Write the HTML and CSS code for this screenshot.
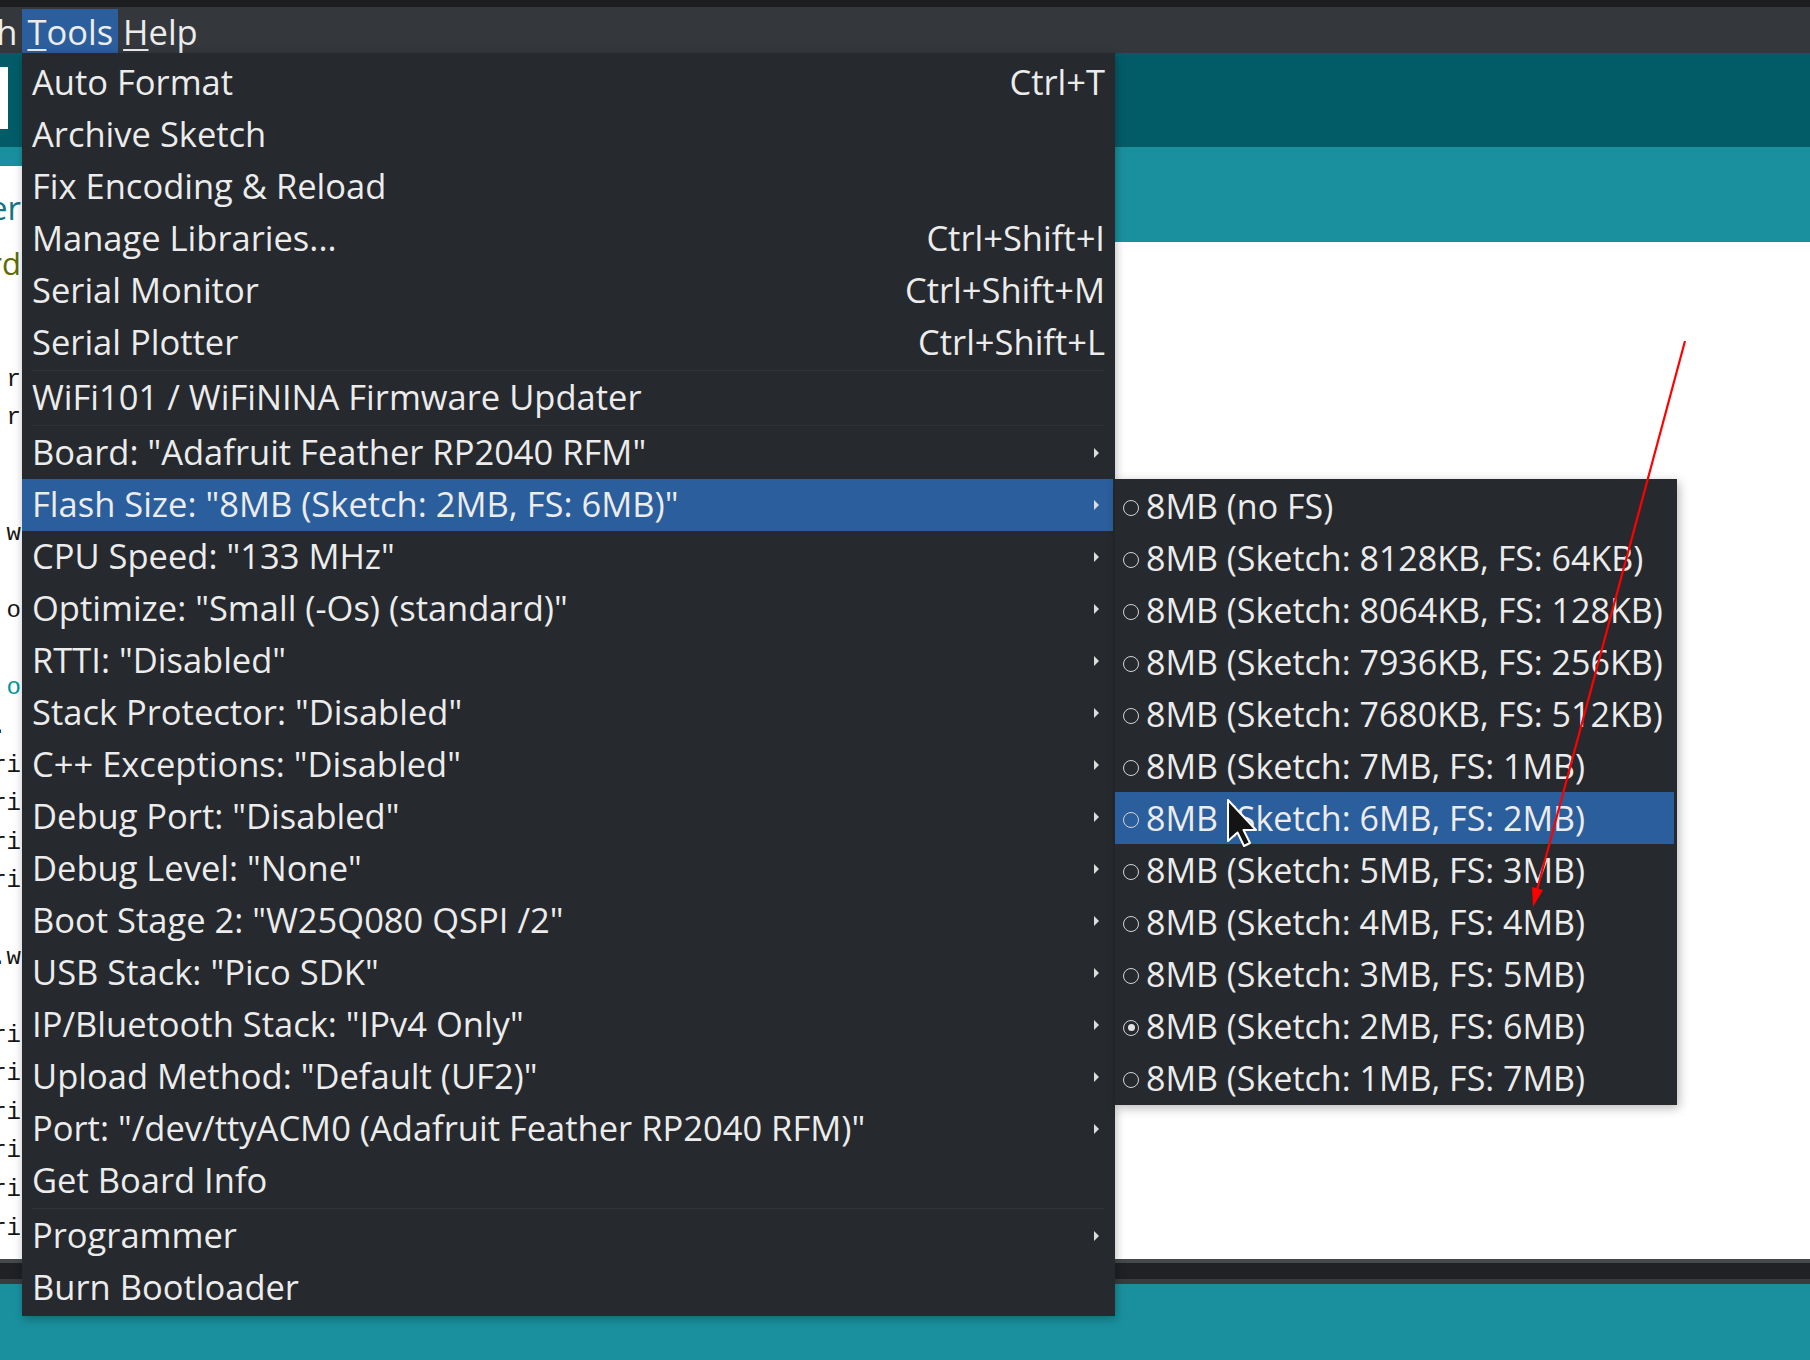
FILE: index.html
```html
<!DOCTYPE html>
<html lang="en">
<head>
<meta charset="utf-8">
<title>Arduino IDE - Tools menu</title>
<link rel="stylesheet" href="styles.css">
</head>
<body>
  <div class="topstrip"></div>
  <nav class="menubar">
    <span class="mb-item cut">Sketch</span>
    <span class="mb-item open"><span class="mn">T</span>ools</span>
    <span class="mb-item"><span class="mn">H</span>elp</span>
  </nav>

  <div class="toolbar"><div class="tb-btn"></div></div>
  <div class="tabs">
    <div class="tab"><div class="tab-label">rp2040_rfm_header</div></div>
  </div>
  <div class="editor">
    <div class="code-line olive sans">// Feather RP2040 RFM board</div>
    <div class="code-line"></div>
    <div class="code-line"></div>
    <div class="code-line">#define RFM95_CS   16 // r</div>
    <div class="code-line">#define RFM95_RST  17 // r</div>
    <div class="code-line"></div>
    <div class="code-line"></div>
    <div class="code-line">RH_RF95 rf95(RFM95_CS, RFM95_INT); w</div>
    <div class="code-line"></div>
    <div class="code-line">int16_t packetnum = 0; o</div>
    <div class="code-line"></div>
    <div class="code-line teal">void setup() { o</div>
    <div class="code-line">  Serial.begin(115200). </div>
    <div class="code-line">  Seri</div>
    <div class="code-line">  Seri</div>
    <div class="code-line">  Seri</div>
    <div class="code-line">  Seri</div>
    <div class="code-line"></div>
    <div class="code-line">  while (!rf95.init()) {.w</div>
    <div class="code-line"></div>
    <div class="code-line">    Seri</div>
    <div class="code-line">    Seri</div>
    <div class="code-line">    Seri</div>
    <div class="code-line">    Seri</div>
    <div class="code-line">    Seri</div>
    <div class="code-line">    Seri</div>
  </div>
  <div class="status"></div>
  <div class="console"></div>

  <div class="menu">
    <div class="item"><span class="label">Auto Format</span><span class="key">Ctrl+T</span></div>
    <div class="item"><span class="label">Archive Sketch</span></div>
    <div class="item"><span class="label">Fix Encoding &amp; Reload</span></div>
    <div class="item"><span class="label">Manage Libraries...</span><span class="key">Ctrl+Shift+I</span></div>
    <div class="item"><span class="label">Serial Monitor</span><span class="key">Ctrl+Shift+M</span></div>
    <div class="item"><span class="label">Serial Plotter</span><span class="key">Ctrl+Shift+L</span></div>
    <div class="sep"></div>
    <div class="item"><span class="label">WiFi101 / WiFiNINA Firmware Updater</span></div>
    <div class="sep"></div>
    <div class="item"><span class="label">Board: "Adafruit Feather RP2040 RFM"</span><span class="arrow"></span></div>
    <div class="item active"><span class="label">Flash Size: "8MB (Sketch: 2MB, FS: 6MB)"</span><span class="arrow"></span>
      <div class="submenu">
        <div class="sub-item"><span class="radio"></span>8MB (no FS)</div>
        <div class="sub-item"><span class="radio"></span>8MB (Sketch: 8128KB, FS: 64KB)</div>
        <div class="sub-item"><span class="radio"></span>8MB (Sketch: 8064KB, FS: 128KB)</div>
        <div class="sub-item"><span class="radio"></span>8MB (Sketch: 7936KB, FS: 256KB)</div>
        <div class="sub-item"><span class="radio"></span>8MB (Sketch: 7680KB, FS: 512KB)</div>
        <div class="sub-item"><span class="radio"></span>8MB (Sketch: 7MB, FS: 1MB)</div>
        <div class="sub-item active"><span class="radio"></span>8MB (Sketch: 6MB, FS: 2MB)</div>
        <div class="sub-item"><span class="radio"></span>8MB (Sketch: 5MB, FS: 3MB)</div>
        <div class="sub-item"><span class="radio"></span>8MB (Sketch: 4MB, FS: 4MB)</div>
        <div class="sub-item"><span class="radio"></span>8MB (Sketch: 3MB, FS: 5MB)</div>
        <div class="sub-item"><span class="radio checked"></span>8MB (Sketch: 2MB, FS: 6MB)</div>
        <div class="sub-item"><span class="radio"></span>8MB (Sketch: 1MB, FS: 7MB)</div>
      </div>
    </div>
    <div class="item"><span class="label">CPU Speed: "133 MHz"</span><span class="arrow"></span></div>
    <div class="item"><span class="label">Optimize: "Small (-Os) (standard)"</span><span class="arrow"></span></div>
    <div class="item"><span class="label">RTTI: "Disabled"</span><span class="arrow"></span></div>
    <div class="item"><span class="label">Stack Protector: "Disabled"</span><span class="arrow"></span></div>
    <div class="item"><span class="label">C++ Exceptions: "Disabled"</span><span class="arrow"></span></div>
    <div class="item"><span class="label">Debug Port: "Disabled"</span><span class="arrow"></span></div>
    <div class="item"><span class="label">Debug Level: "None"</span><span class="arrow"></span></div>
    <div class="item"><span class="label">Boot Stage 2: "W25Q080 QSPI /2"</span><span class="arrow"></span></div>
    <div class="item"><span class="label">USB Stack: "Pico SDK"</span><span class="arrow"></span></div>
    <div class="item"><span class="label">IP/Bluetooth Stack: "IPv4 Only"</span><span class="arrow"></span></div>
    <div class="item"><span class="label">Upload Method: "Default (UF2)"</span><span class="arrow"></span></div>
    <div class="item"><span class="label">Port: "/dev/ttyACM0 (Adafruit Feather RP2040 RFM)"</span><span class="arrow"></span></div>
    <div class="item"><span class="label">Get Board Info</span></div>
    <div class="sep"></div>
    <div class="item"><span class="label">Programmer</span><span class="arrow"></span></div>
    <div class="item"><span class="label">Burn Bootloader</span></div>
  </div>

  <svg class="annotation" width="1810" height="1360" viewBox="0 0 1810 1360" aria-hidden="true">
    <line x1="1685" y1="341" x2="1537" y2="890" stroke="#ff0000" stroke-width="2.2"/>
    <polygon points="1533,907 1543,890 1532,887" fill="#ff0000"/>
  </svg>

  <svg class="cursor" width="36" height="52" viewBox="0 0 36 52" aria-hidden="true">
    <polygon points="2,2 2,43 11.5,34.5 18,48 24,45 17.5,32 30,32" fill="#141414" stroke="#ffffff" stroke-width="2" stroke-linejoin="round"/>
  </svg>
</body>
</html>
```

FILE: styles.css
```css
* { box-sizing: border-box; }

html, body { margin: 0; padding: 0; }

body {
  width: 1810px;
  height: 1360px;
  overflow: hidden;
  position: relative;
  background: #ffffff;
  font-family: "Open Sans", "Noto Sans", sans-serif;
}

.topstrip {
  height: 7px;
  background: #1d1e20;
}

.menubar {
  height: 46px;
  background: #34373b;
  display: flex;
  align-items: stretch;
  color: #ececec;
  font-size: 34.5px;
  white-space: nowrap;
}

.mb-item {
  display: flex;
  align-items: center;
  padding: 0 5px;
  margin-top: 2px;
}

.mb-item.cut { margin-left: -94px; }

.mb-item.open { background: #2b5e9c; }

.mn {
  text-decoration: underline;
  text-decoration-thickness: 2px;
  text-underline-offset: 4px;
}

.toolbar {
  height: 94px;
  background: #025c68;
  padding-top: 14px;
}

.tb-btn {
  width: 8px;
  height: 62px;
  background: #ffffff;
}

.tabs {
  height: 95px;
  background: #1a909e;
  padding-top: 19px;
}

.tab {
  width: 320px;
  height: 76px;
  background: #ffffff;
  padding-top: 19px;
}

.tab-label {
  width: 21px;
  display: flex;
  justify-content: flex-end;
  overflow: hidden;
  white-space: nowrap;
  font-size: 33px;
  color: #137680;
}

.editor {
  height: 1017px;
  background: #ffffff;
  padding-top: 2px;
}

.code-line {
  width: 21px;
  height: 38.6px;
  display: flex;
  align-items: center;
  justify-content: flex-end;
  overflow: hidden;
  white-space: pre;
  font-family: "Liberation Mono", "DejaVu Sans Mono", monospace;
  font-size: 24px;
  color: #151515;
}

.code-line.olive { color: #5e6d03; }
.code-line.teal { color: #00979c; }
.code-line.sans {
  font-family: "Open Sans", "Noto Sans", sans-serif;
  font-size: 31px;
}

.status {
  height: 25px;
  background: #1f2124;
  border-top: 4px solid #46494c;
  border-bottom: 5px solid #383b3f;
}

.console {
  height: 76px;
  background: #1a909e;
}

/* Dropdown menu */
.menu {
  position: absolute;
  left: 22px;
  top: 53px;
  width: 1093px;
  background: #26292d;
  padding: 4px 0 2px;
  color: #ececec;
  font-size: 34.5px;
  box-shadow: 1px 3px 9px rgba(0, 0, 0, 0.28);
}

.item {
  position: relative;
  height: 52px;
  display: flex;
  align-items: center;
  padding: 0 10px 3px 10px;
  white-space: nowrap;
}

.item .label { flex: 1; }

.item .key { margin-left: 20px; }

.item .arrow {
  width: 0;
  height: 0;
  border-left: 5px solid #dcdcdc;
  border-top: 5px solid transparent;
  border-bottom: 5px solid transparent;
  margin: 3px 6px 0 0;
}

.item.active {
  background: #2b5e9c;
  margin-right: 2px;
  padding-right: 8px;
}

.sep {
  height: 3px;
  padding: 1px 10px;
}

.sep::after {
  content: "";
  display: block;
  height: 1px;
  background: #303338;
}

/* Submenu */
.submenu {
  position: absolute;
  left: calc(100% + 2px);
  top: 0;
  width: 562px;
  background: #26292d;
  padding: 1px 0;
  box-shadow: 2px 3px 10px rgba(0, 0, 0, 0.28);
  color: #ececec;
  font-size: 34px;
  z-index: 2;
}

.sub-item {
  height: 52px;
  display: flex;
  align-items: center;
  padding-left: 8px;
  white-space: nowrap;
}

.sub-item.active {
  background: #2b5e9c;
  margin-right: 3px;
}

.radio {
  width: 16px;
  height: 16px;
  border: 1.5px solid #d4d4d4;
  border-radius: 50%;
  margin: 3px 7px 0 0;
  flex: none;
  display: flex;
  align-items: center;
  justify-content: center;
}

.radio.checked::after {
  content: "";
  width: 7px;
  height: 7px;
  border-radius: 50%;
  background: #e4e4e4;
}

/* Overlays */
.annotation {
  position: absolute;
  left: 0;
  top: 0;
  pointer-events: none;
  z-index: 5;
}

.cursor {
  position: absolute;
  left: 1226px;
  top: 798px;
  z-index: 6;
}
```
